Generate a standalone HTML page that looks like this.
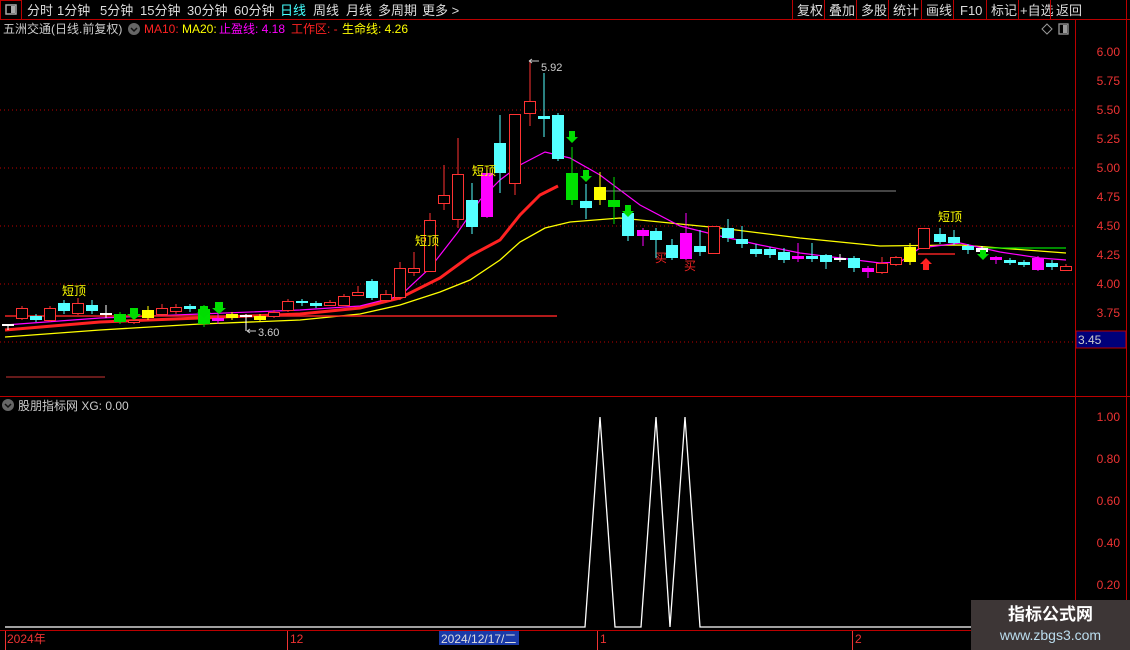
<!DOCTYPE html>
<html><head><meta charset="utf-8"><style>
body{margin:0;background:#000;width:1130px;height:650px;overflow:hidden;font-family:"Liberation Sans","Noto Sans CJK SC",sans-serif;}
svg{position:absolute;left:0;top:0}
.tb{position:absolute;top:0;height:20px;font-size:13px;color:#ddd;line-height:19px}
#wm{position:absolute;left:971px;top:600px;width:159px;height:50px;background:#3d3636;text-align:center;color:#fff}
</style></head><body>
<svg id="s" width="1130" height="650" font-family="Liberation Sans, Noto Sans CJK SC, sans-serif">
<!-- top bar -->
<line x1="0" y1="19.5" x2="1130" y2="19.5" stroke="#b00" />
<rect x="0.5" y="0.5" width="21" height="19" fill="none" stroke="#b00"/>
<rect x="6" y="5" width="10" height="9" fill="none" stroke="#aaa" stroke-width="1.5"/><rect x="11" y="6" width="4" height="7" fill="#aaa"/>
<g font-size="13" fill="#ddd">
<text x="27" y="15">分时</text><text x="57" y="15">1分钟</text><text x="100" y="15">5分钟</text><text x="140" y="15">15分钟</text><text x="187" y="15">30分钟</text><text x="234" y="15">60分钟</text>
<text x="280" y="15" fill="#4ff">日线</text><text x="313" y="15">周线</text><text x="346" y="15">月线</text><text x="378" y="15">多周期</text><text x="422" y="15">更多 &gt;</text>
<text x="797" y="15">复权</text><text x="829" y="15">叠加</text><text x="861" y="15">多股</text><text x="893" y="15">统计</text><text x="926" y="15">画线</text><text x="960" y="15">F10</text><text x="991" y="15">标记</text><text x="1020" y="15">+自选</text><text x="1056" y="15">返回</text>
</g>
<g stroke="#b00"><line x1="792.5" y1="0" x2="792.5" y2="19"/><line x1="824.5" y1="0" x2="824.5" y2="19"/><line x1="856.5" y1="0" x2="856.5" y2="19"/><line x1="888.5" y1="0" x2="888.5" y2="19"/><line x1="921.5" y1="0" x2="921.5" y2="19"/><line x1="953.5" y1="0" x2="953.5" y2="19"/><line x1="986.5" y1="0" x2="986.5" y2="19"/><line x1="1018.5" y1="0" x2="1018.5" y2="19"/><line x1="1050.5" y1="0" x2="1050.5" y2="19"/><line x1="1126.5" y1="0" x2="1126.5" y2="650"/>
<line x1="1075.5" y1="20" x2="1075.5" y2="628"/><line x1="0" y1="396.5" x2="1130" y2="396.5"/><line x1="0" y1="630.5" x2="1130" y2="630.5"/></g>
<!-- info line -->
<g font-size="12">
<text x="3" y="33" fill="#ccc">五洲交通(日线.前复权)</text>
<circle cx="134" cy="29" r="6" fill="#666"/><path d="M131 28l3 3 3-3" stroke="#111" fill="none" stroke-width="1.5"/>
<text x="144" y="33" fill="#f22">MA10:</text><text x="182" y="33" fill="#ff0">MA20:</text><text x="219" y="33" fill="#f0f">止盈线: 4.18</text><text x="291" y="33" fill="#f22">工作区: -</text><text x="342" y="33" fill="#ff0">生命线: 4.26</text>
</g>
<path d="M1047 24l5 5-5 5-5-5z" fill="none" stroke="#999"/>
<rect x="1059" y="24" width="9" height="10" fill="none" stroke="#999" stroke-width="1.3"/><rect x="1063" y="25" width="4" height="8" fill="#999"/>
<!-- axis labels -->
<g font-size="12" fill="#e33" text-anchor="end">
<text x="1120" y="56">6.00</text><text x="1120" y="85">5.75</text><text x="1120" y="114">5.50</text><text x="1120" y="143">5.25</text><text x="1120" y="172">5.00</text><text x="1120" y="201">4.75</text><text x="1120" y="230">4.50</text><text x="1120" y="259">4.25</text><text x="1120" y="288">4.00</text><text x="1120" y="317">3.75</text>
<text x="1120" y="421">1.00</text><text x="1120" y="463">0.80</text><text x="1120" y="505">0.60</text><text x="1120" y="547">0.40</text><text x="1120" y="589">0.20</text>
</g>
<rect x="1076" y="331" width="50" height="17" fill="#00007a" stroke="#b00"/><text x="1078" y="344" font-size="12" fill="#ccc">3.45</text>
<g stroke="#b00" stroke-dasharray="1,3"><line x1="0" y1="110" x2="1075" y2="110"/><line x1="0" y1="168" x2="1075" y2="168"/><line x1="0" y1="226" x2="1075" y2="226"/><line x1="0" y1="284" x2="1075" y2="284"/><line x1="0" y1="342" x2="1075" y2="342"/></g>
<line x1="6" y1="377" x2="105" y2="377" stroke="#c33"/>
<!-- lines -->
<polyline fill="none" stroke="#ff0" stroke-width="1.3" points="5,337 100,330 200,324 300,320 360,314 400,305 440,292 470,280 500,260 520,242 545,228 570,222 620,218 680,224 720,228 800,238 880,246 960,245 1066,253"/>
<polyline fill="none" stroke="#00dd00" stroke-width="1.3" points="980,248 1066,248"/>
<polyline fill="none" stroke="#f22" stroke-width="3" points="5,330 100,322 200,318 300,314 360,308 400,298 440,278 470,256 500,240 520,215 540,195 558,186"/>
<polyline fill="none" stroke="#f0f" stroke-width="1.2" points="5,325 100,318 200,314 300,310 360,306 400,296 430,268 458,232 480,200 500,180 520,165 545,152 570,158 600,175 640,205 680,226 720,236 760,245 800,253 840,258 880,263 900,262 920,248 960,243 1000,252 1040,258 1066,260"/>
<line x1="600" y1="191" x2="896" y2="191" stroke="#888"/>
<line x1="5" y1="316" x2="557" y2="316" stroke="#e22" stroke-width="1.5"/>
<line x1="918" y1="254" x2="955" y2="254" stroke="#e22" stroke-width="1.5"/>
<g id="c"></g>
<!-- labels -->
<g font-size="12" fill="#ff0"><text x="62" y="295">短顶</text><text x="415" y="245">短顶</text><text x="472" y="175">短顶</text><text x="938" y="221">短顶</text></g>
<g font-size="12" fill="#e22"><text x="655" y="262">买</text><text x="684" y="270">买</text></g>
<text x="541" y="71" font-size="11" fill="#ccc">5.92</text><path d="M529 61l3-2m-3 2l3 2m-3-2h10" stroke="#ccc" fill="none"/>
<text x="258" y="336" font-size="11" fill="#ccc">3.60</text><path d="M247 331l3-2m-3 2l3 2m-3-2h9" stroke="#ccc" fill="none"/>
<g fill="#00dd00"><path d="M130 308h8v6h3l-7 6-7-6h3z"/><path d="M200 306h8v6h3l-7 6-7-6h3z"/><path d="M215 302h8v6h3l-7 6-7-6h3z"/><path d="M569 131h6v6h3l-6 6-6-6h3z"/><path d="M583 170h6v6h3l-6 6-6-6h3z"/><path d="M625 205h6v6h3l-6 6-6-6h3z"/><path d="M980 250h6v4h3l-6 6-6-6h3z"/></g>
<path d="M926 270h-3v-6h-3l6-6 6 6h-3v6z" fill="#f22"/>
<!-- lower panel -->
<g font-size="12"><circle cx="8" cy="405" r="6" fill="#666"/><path d="M5 404l3 3 3-3" stroke="#111" fill="none" stroke-width="1.5"/><text x="18" y="410" fill="#ccc">股朋指标网 XG: 0.00</text></g>
<polyline fill="none" stroke="#fff" stroke-width="1.3" points="5,627 585,627 600,417 615,627 641,627 656,417 670,627 685,417 700,627 1070,627"/>
<g font-size="12" fill="#e33"><text x="7" y="643">2024年</text><text x="290" y="643">12</text><text x="600" y="643">1</text><text x="855" y="643">2</text></g>
<line x1="5.5" y1="631" x2="5.5" y2="650" stroke="#e33"/><line x1="287.5" y1="631" x2="287.5" y2="650" stroke="#e33"/><line x1="597.5" y1="631" x2="597.5" y2="650" stroke="#e33"/><line x1="852.5" y1="631" x2="852.5" y2="650" stroke="#e33"/>
<rect x="439" y="631" width="80" height="14" fill="#1a3aa8"/><text x="441" y="643" font-size="12" fill="#ddd">2024/12/17/二</text>
</svg>
<div id="wm"><div style="font-size:17px;font-weight:bold;margin-top:4px;line-height:22px">指标公式网</div><div style="font-size:14px;color:#bde;line-height:18px">www.zbgs3.com</div></div>
<script>
// [x, top, bottom, wickTop, wickBot, color]  R=hollow red, C cyan, M magenta, Y yellow, G green, W white
var d=[[8,324,326,324,330,'W'],[22,308,318,306,320,'R'],[36,316,320,314,322,'C'],[50,308,320,306,322,'R'],[64,303,311,300,314,'C'],[78,303,313,298,315,'R'],[92,305,311,300,314,'C'],[106,313,314,305,318,'W'],[120,314,322,312,324,'G'],[134,320,322,318,324,'R'],[148,310,318,306,320,'Y'],[162,308,314,304,316,'R'],[176,307,311,304,314,'R'],[190,306,309,304,312,'C'],[204,309,324,305,327,'G'],[218,318,321,314,324,'M'],[232,314,318,312,320,'Y'],[246,315,317,314,331,'W'],[260,316,320,314,322,'Y'],[274,312,316,310,318,'R'],[288,301,310,299,312,'R'],[302,301,303,299,306,'C'],[316,303,306,301,308,'C'],[330,302,305,300,306,'R'],[344,296,305,294,306,'R'],[358,292,295,286,296,'R'],[372,281,298,279,300,'C'],[386,294,300,290,302,'R'],[400,268,297,262,300,'R'],[414,268,272,252,276,'R'],[430,220,271,213,272,'R'],[444,195,203,165,210,'R'],[458,174,219,138,228,'R'],[472,200,227,183,234,'C'],[487,173,217,170,218,'M'],[500,143,173,115,193,'C'],[515,114,183,114,195,'R'],[530,101,113,61,126,'R'],[544,116,119,73,137,'C'],[558,115,159,113,161,'C'],[572,173,200,147,205,'G'],[586,201,208,184,219,'C'],[600,187,200,172,205,'Y'],[614,200,207,177,224,'G'],[628,213,236,210,241,'C'],[643,230,236,228,246,'M'],[656,231,240,228,258,'C'],[672,245,258,239,260,'C'],[686,233,259,213,260,'M'],[700,246,252,230,256,'C'],[714,226,253,226,254,'R'],[728,228,238,219,242,'C'],[742,239,244,226,248,'C'],[756,249,254,244,257,'C'],[770,249,255,247,258,'C'],[784,252,260,248,263,'C'],[798,256,259,243,262,'M'],[812,256,259,243,262,'C'],[826,255,262,254,269,'C'],[840,258,259,254,262,'W'],[854,258,268,256,272,'C'],[868,268,272,266,278,'M'],[882,263,272,257,274,'R'],[896,257,264,256,266,'R'],[910,247,262,243,265,'Y'],[924,228,248,228,249,'R'],[940,234,242,228,244,'C'],[954,237,243,230,245,'C'],[968,246,250,244,254,'C'],[982,248,252,246,257,'W'],[996,257,260,256,264,'M'],[1010,260,263,258,265,'C'],[1024,262,265,260,267,'C'],[1038,258,270,256,271,'M'],[1052,263,267,260,270,'C'],[1066,266,270,264,271,'R']];
var col={R:'#ff3232',C:'#54ffff',M:'#ff00ff',Y:'#ffff00',G:'#00e000',W:'#ffffff'},h='';
d.forEach(function(c){var k=col[c[5]];h+='<line x1="'+c[0]+'" y1="'+c[3]+'" x2="'+c[0]+'" y2="'+c[4]+'" stroke="'+k+'"/>';
var hgt=Math.max(c[2]-c[1],2);
if(c[5]=='R')h+='<rect x="'+(c[0]-5.5)+'" y="'+(c[1]+.5)+'" width="11" height="'+hgt+'" fill="#000" stroke="'+k+'"/>';
else h+='<rect x="'+(c[0]-6)+'" y="'+c[1]+'" width="12" height="'+hgt+'" fill="'+k+'"/>';});
document.getElementById('c').innerHTML=h;
</script>
</body></html>
